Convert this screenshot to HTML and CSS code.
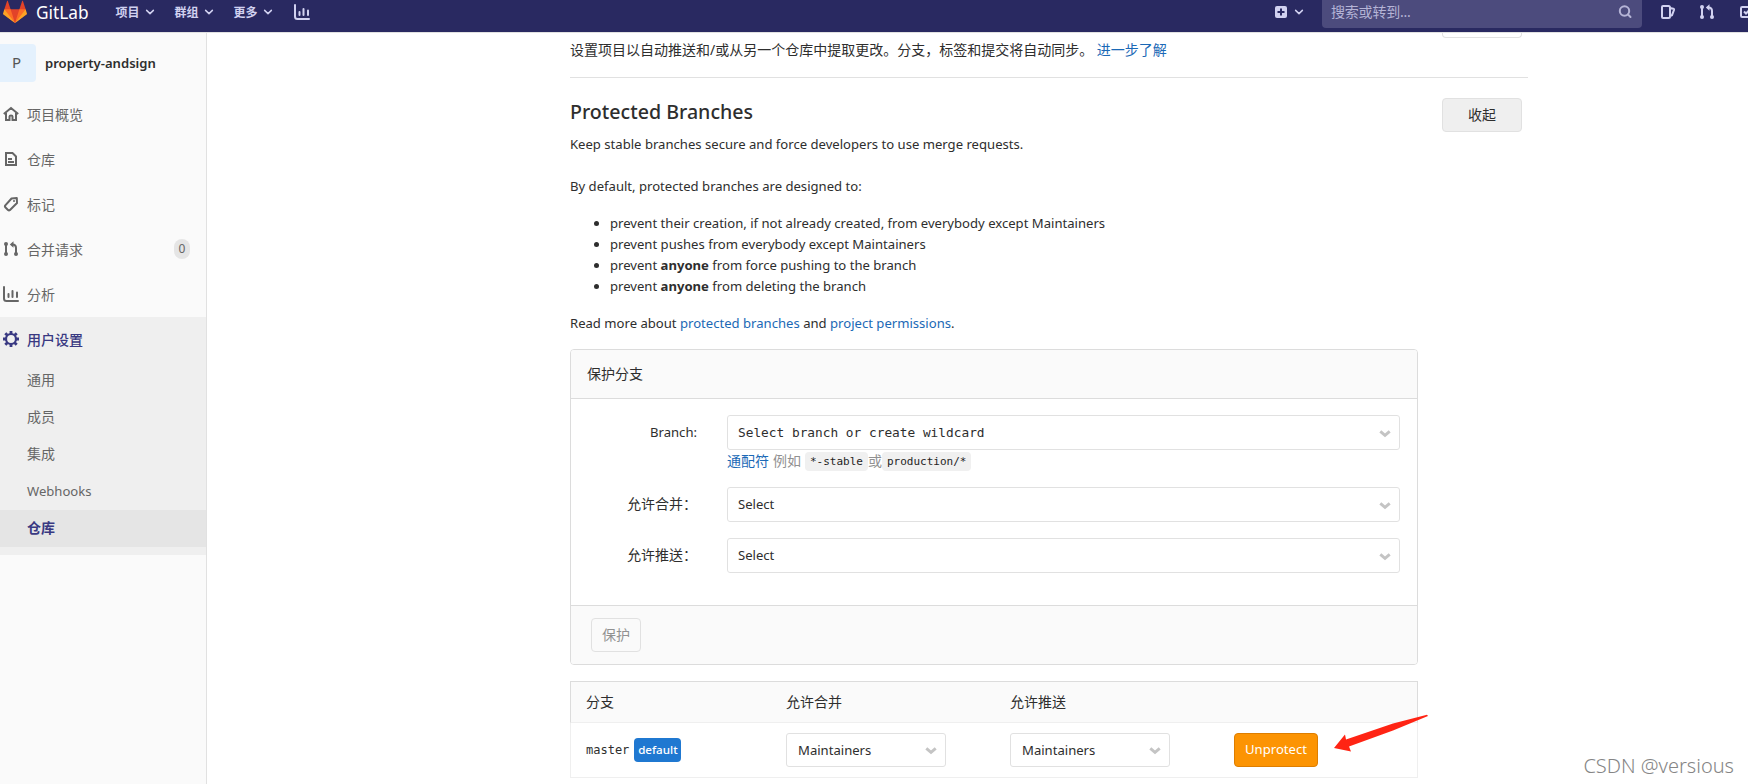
FILE: index.html
```html
<!DOCTYPE html>
<html lang="zh-CN">
<head>
<meta charset="utf-8">
<title>GitLab</title>
<link rel="stylesheet" href="styles.css">
</head>
<body>
<svg class="defs" width="0" height="0">
  <symbol id="chev" viewBox="0 0 16 16"><path d="M3.5 5.8 8 10.2l4.500-4.400" fill="none" stroke="currentColor" stroke-width="2" stroke-linecap="round" stroke-linejoin="round"/></symbol>
  <symbol id="caret" viewBox="0 0 12 8"><path d="M1.300 1.300 6 5.400l4.700-4.100" fill="none" stroke="#c4c4c4" stroke-width="2.900"/></symbol>
  <symbol id="chart" viewBox="0 0 16 16"><path d="M1 1v11.500Q1 15 3.500 15H15" fill="none" stroke="currentColor" stroke-width="2" stroke-linecap="round"/><path d="M5.500 8v3M9.500 5v6M14 6.500V11" fill="none" stroke="currentColor" stroke-width="2" stroke-linecap="round"/></symbol>
  <symbol id="merge" viewBox="0 0 16 16"><path d="M3 3v10M13 13V7q0-3.500-3.500-3.500H8.500" fill="none" stroke="currentColor" stroke-width="2"/><circle cx="3" cy="3" r="2" fill="currentColor"/><circle cx="3" cy="13" r="2" fill="currentColor"/><circle cx="13" cy="13" r="2" fill="currentColor"/><path d="M10.500.3v6.400L6.800 3.500z" fill="currentColor"/></symbol>
</svg>

<header class="navbar">
  <a class="brand">
    <svg width="24" height="24" viewBox="0 0 36 36"><path fill="#e24329" d="M2 14l9.380 9v-9l-4-12.280c-.205-.632-1.176-.632-1.380 0z"/><path fill="#e24329" d="M34 14l-9.380 9v-9l4-12.280c.205-.632 1.176-.632 1.380 0z"/><path fill="#e24329" d="M18 34.380 3 14h30z"/><path fill="#fc6d26" d="M18 34.380 11.380 14H2l4 11z"/><path fill="#fc6d26" d="M18 34.380 24.620 14H34l-4 11z"/><path fill="#fca326" d="M2 14 .1 20.160c-.18.565 0 1.200.5 1.560L18 34.380z"/><path fill="#fca326" d="M34 14l1.900 6.160c.18.565 0 1.200-.5 1.560L18 34.380z"/></svg>
    <span class="wordmark">GitLab</span>
  </a>
  <nav class="menu">
    <a>项目<svg class="i12"><use href="#chev"/></svg></a>
    <a>群组<svg class="i12"><use href="#chev"/></svg></a>
    <a>更多<svg class="i12"><use href="#chev"/></svg></a>
    <svg class="i16"><use href="#chart"/></svg>
  </nav>
  <div class="tools">
    <a class="new"><svg width="12" height="12" viewBox="0 0 12 12"><rect width="12" height="12" rx="2" fill="currentColor"/><path d="M6 2.500v7M2.500 6h7" stroke="#292961" stroke-width="2"/></svg><svg class="i12"><use href="#chev"/></svg></a>
    <div class="search"><span>搜索或转到...</span><svg width="14" height="14" viewBox="0 0 14 14"><circle cx="6.500" cy="6" r="4.700" fill="none" stroke="currentColor" stroke-width="2"/><path d="m10 9.500 2.500 2.500" stroke="currentColor" stroke-width="2" stroke-linecap="round"/></svg></div>
    <div class="quick">
      <svg class="i16" viewBox="0 0 16 16"><path d="M3 2h5.500q1.500 0 1.500 1.500v9Q10 14 8.500 14H3Q2 14 2 13V3q0-1 1-1zM10 4l3.300.8q1 .3.700 1.200L12 11.200l-2 1" fill="none" stroke="currentColor" stroke-width="2"/></svg>
      <svg class="i16"><use href="#merge"/></svg>
      <svg class="i16" viewBox="0 0 16 16"><rect x="3" y="3" width="11" height="10" rx="1.200" fill="none" stroke="currentColor" stroke-width="2"/><path d="m6 7.500 2 2 3-3" fill="none" stroke="currentColor" stroke-width="2"/></svg>
    </div>
  </div>
</header>

<div class="page">
  <aside class="sidebar">
    <div class="context"><span class="avatar">P</span><b class="project">property-andsign</b></div>
    <ul class="side">
      <li><svg class="i16" viewBox="0 0 16 16"><path d="M.8 8 8 2l7.200 6M3 7v7h3.500v-3.500q0-1 1.500-1t1.500 1V14H13V7" fill="none" stroke="currentColor" stroke-width="2"/></svg>项目概览</li>
      <li><svg class="i16" viewBox="0 0 16 16"><path d="M3 2h6.500L13 5.500V14H3z" fill="none" stroke="currentColor" stroke-width="2"/><path d="M5 8h4M5 11h6" stroke="currentColor" stroke-width="1.800"/></svg>仓库</li>
      <li><svg class="i16" viewBox="0 0 16 16"><path d="M8.500 2.500 13.800 2 14 7l-7 7q-1 .8-2 0l-2.700-2.700q-.8-1 0-2z" fill="none" stroke="currentColor" stroke-width="2" stroke-linejoin="round"/><circle cx="11" cy="5" r="1" fill="currentColor"/></svg>标记</li>
      <li><svg class="i16"><use href="#merge"/></svg>合并请求<span class="count">0</span></li>
      <li><svg class="i16"><use href="#chart"/></svg>分析</li>
    </ul>
    <div class="open">
      <div class="current"><svg class="i16" viewBox="0 0 16 16"><circle cx="8" cy="8" r="5" fill="none" stroke="currentColor" stroke-width="2.200"/><path d="M8 0v3M8 13v3M0 8h3M13 8h3M2.300 2.300l2 2M11.700 11.700l2 2M2.300 13.700l2-2M11.700 4.300l2-2" stroke="currentColor" stroke-width="2.800"/></svg>用户设置</div>
      <a>通用</a><a>成员</a><a>集成</a><a class="latin">Webhooks</a><a class="active">仓库</a>
    </div>
  </aside>

  <main class="content">
    <section class="mirror">
      <p>设置项目以自动推送和/或从另一个仓库中提取更改。分支，标签和提交将自动同步。 <a class="link">进一步了解</a></p>
      <span class="btn cut"></span>
    </section>
    <section class="protected">
      <div class="top"><div><h4>Protected Branches</h4><p class="lead latin">Keep stable branches secure and force developers to use merge requests.</p></div><button class="btn collapse">收起</button></div>
      <p class="intro latin">By default, protected branches are designed to:</p>
      <ul class="rules latin">
        <li>prevent their creation, if not already created, from everybody except Maintainers</li>
        <li>prevent pushes from everybody except Maintainers</li>
        <li>prevent <b>anyone</b> from force pushing to the branch</li>
        <li>prevent <b>anyone</b> from deleting the branch</li>
      </ul>
      <p class="more latin">Read more about <a class="link">protected branches</a> and <a class="link">project permissions</a>.</p>

      <div class="card">
        <div class="card-head">保护分支</div>
        <div class="card-body">
          <div class="field"><label class="latin">Branch:</label><div class="control"><div class="select mono"><span>Select branch or create wildcard</span><svg class="caret"><use href="#caret"/></svg></div>
            <div class="help"><a class="link">通配符</a><span class="eg">例如</span><code>*-stable</code><span>或</span><code>production/*</code></div></div></div>
          <div class="field"><label>允许合并：</label><div class="control"><div class="select latin"><span>Select</span><svg class="caret"><use href="#caret"/></svg></div></div></div>
          <div class="field"><label>允许推送：</label><div class="control"><div class="select latin"><span>Select</span><svg class="caret"><use href="#caret"/></svg></div></div></div>
        </div>
        <div class="card-foot"><button class="btn protect">保护</button></div>
      </div>

      <div class="table">
        <div class="row head"><span>分支</span><span>允许合并</span><span>允许推送</span><span></span></div>
        <div class="row">
          <div class="name"><span class="ref">master</span><span class="badge">default</span></div>
          <div><div class="select small latin"><span>Maintainers</span><svg class="caret"><use href="#caret"/></svg></div></div>
          <div><div class="select small latin"><span>Maintainers</span><svg class="caret"><use href="#caret"/></svg></div></div>
          <div><button class="btn warn latin">Unprotect</button></div>
        </div>
      </div>
    </section>
  </main>
</div>
<svg class="arrow" width="96" height="40" viewBox="0 0 96 40"><path d="M1 34 12 20.500 13 25.500 60 9.500 94 .8 95 2 60 16.500 16 32.500 18 37.500z" fill="#ff2414"/></svg>
<div class="watermark">CSDN @versious</div>
</body>
</html>
```
FILE: styles.css
```css
* { box-sizing: border-box; }
body { margin: 0; width: 1748px; height: 784px; overflow: hidden; position: relative; background: #fff; color: #2e2e2e; font: 14px/21px "Noto Sans", "Noto Sans CJK SC", sans-serif; }
.defs { position: absolute; }
p, h4, ul { margin: 0; padding: 0; }
ul { list-style: none; }
svg { display: block; flex: none; }
.i12 { width: 12px; height: 12px; }
.i16 { width: 16px; height: 16px; }
.link { color: #1b69b6; }

.navbar { height: 33px; display: flex; align-items: center; padding: 0 0 8px 3px; background: #292961; color: #d1d1f0; border-bottom: 1px solid #e1e1e1; overflow: hidden; }
.brand { display: flex; align-items: center; gap: 9px; width: 112.500px; }
.wordmark { color: #fff; font-size: 17.300px; }
.menu { display: flex; align-items: center; gap: 18px; font-size: 12px; font-weight: 700; }
.menu a { display: flex; align-items: center; gap: 4px; width: 41px; }
.menu .i16 { margin-left: 1px; }
.tools { display: flex; align-items: center; margin-left: auto; width: 473px; flex: none; }
.new { display: flex; align-items: center; gap: 6px; width: 47px; flex: none; }
.search { display: flex; align-items: center; justify-content: space-between; width: 320px; height: 32px; margin-top: -1px; padding: 0 10px 0 9px; border-radius: 4px; background: #4c4b7d; color: #b5b4d6; flex: none; }
.search span { font-size: 14px; letter-spacing: -0.2px; }
.quick { display: flex; gap: 23px; margin-left: 18px; }

.page { display: flex; height: 751px; }
.sidebar { width: 207px; flex: none; background: #fafafa; border-right: 1px solid #e1e1e1; color: #666; }
.context { display: flex; align-items: center; height: 59px; gap: 9px; }
.avatar { width: 36px; height: 38px; border-radius: 0 4px 4px 0; background: #e4f1fd; color: #555; display: grid; place-items: center; font-size: 15px; padding-right: 3px; }
.project { color: #2e2e2e; font-weight: 600; font-size: 13.100px; padding-top: 1px; }
.side li, .current { display: flex; align-items: center; height: 45px; padding: 0 0 1px 3px; gap: 8px; }
.side { height: 225px; }
.count { margin-left: auto; margin-right: 16px; width: 16px; height: 20px; border-radius: 10px; background: #e5e5e5; text-align: center; font-size: 12px; line-height: 20px; }
.open { height: 238px; background: #efefef; }
.current { color: #393982; font-weight: 500; }
.open a { display: flex; align-items: center; height: 37px; padding: 0 0 2px 27px; }
.open a.latin { padding-bottom: 0; }
.open a.active { background: #e5e5e5; color: #393982; font-weight: 700; }

.content { margin-left: 363px; width: 958px; }
.mirror { display: flex; justify-content: space-between; height: 45px; padding-right: 6px; border-bottom: 1px solid #e1e1e1; }
.mirror p { padding-top: 6px; }
.btn { height: 34px; border: 1px solid #e1e1e1; border-radius: 4px; background: #fff; font: inherit; color: #2e2e2e; padding: 0 0 2px; }
.latin { font-size: 13.100px; }
.cut { width: 80px; height: 5px; border-top: 0; border-radius: 0 0 4px 4px; }
.top { display: flex; justify-content: space-between; height: 77px; padding: 20px 6px 0 0; }
.top h4 { font-size: 19.600px; font-weight: 500; line-height: 26px; padding-top: 1px; }
.lead { margin-top: 9px; }
.collapse { width: 80px; background: #efefef; }
.intro { margin-top: 21px; }
.rules { margin: 16px 0; padding-left: 40px; list-style: disc; }
.card { width: 848px; height: 316px; border: 1px solid #dcdcdc; border-radius: 4px; margin-top: 15px; overflow: hidden; }
.card-head { height: 49px; padding: 13px 16px; background: #fafafa; border-bottom: 1px solid #dcdcdc; }
.card-body { height: 206px; padding: 16px 17px 0 0; }
.field { display: flex; justify-content: space-between; margin-bottom: 16px; }
.field label { width: 126px; text-align: right; padding-top: 6px; }
.field label.latin { padding-top: 7px; }
.control { width: 673px; }
.select { display: flex; align-items: center; justify-content: space-between; height: 35px; padding: 0 8px 0 10px; border: 1px solid #e1e1e1; border-radius: 3px; background: #fff; }
.mono { font-family: "DejaVu Sans Mono", monospace; font-size: 12.800px; }
.caret { width: 12px; height: 8px; margin-top: 2px; }
.help { display: flex; align-items: center; height: 21px; color: #919191; }
.eg { margin: 0 4px 0 4px; }
code { height: 19px; margin-top: 2px; padding: 0 5px; border-radius: 4px; background: #f0f0f0; color: #1f1f1f; font: 11px/20px "DejaVu Sans Mono", monospace; }
.card-foot { height: 60px; padding: 12px 20px; background: #fafafa; border-top: 1px solid #dcdcdc; }
.protect { width: 50px; background: #fafafa; color: #919191; }
.table { width: 848px; margin-top: 16px; border: 1px solid #efefef; }
.row { display: grid; grid-template-columns: 200px 224px 224px 1fr; align-items: center; height: 54px; padding-left: 15px; }
.head { width: 848px; height: 42px; margin: -1px 0 0 -1px; padding: 0 0 2px 15px; border: 1px solid #dcdcdc; border-bottom-color: #efefef; background: #fafafa; }
.name { display: flex; align-items: center; gap: 5px; }
.ref { font: 12px/20px "DejaVu Sans Mono", monospace; }
.badge { width: 47px; height: 24px; border-radius: 4px; background: #1f78d1; color: #fff; font-size: 11.600px; line-height: 24px; text-align: center; font-weight: 500; }
.small { width: 160px; height: 34px; padding-left: 11px; }
.warn { width: 84px; background: #fc9403; border-color: #de7e00; color: #fff; font-size: 13.100px; }
.arrow { position: absolute; left: 1333px; top: 714px; }
.watermark { position: absolute; right: 14px; top: 753px; font-size: 20px; font-weight: 300; line-height: 26px; color: #858585; }
```
